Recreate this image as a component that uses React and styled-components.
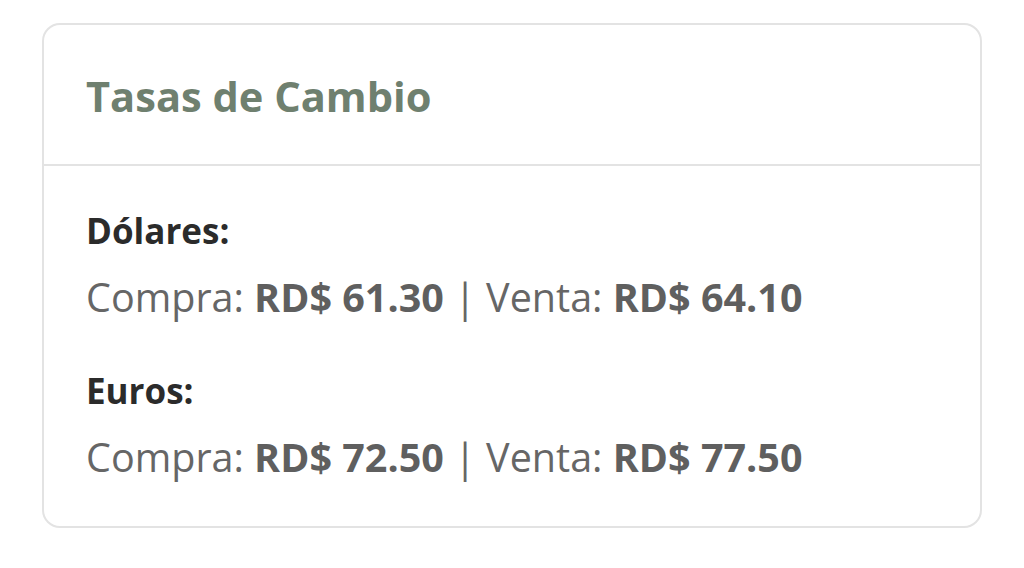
import React from 'react'
import styled, { createGlobalStyle } from 'styled-components'

const Global = createGlobalStyle`
  body {
    margin: 0;
    background: #ffffff;
    font-family: "Open Sans", "Noto Sans", sans-serif;
  }
`

const Page = styled.div`
  padding: 23px 42px 0 42px;
`

const Card = styled.section`
  border: 2px solid #e3e3e3;
  border-radius: 18px;
  background: #fff;
  overflow: hidden;
`

const Header = styled.div`
  height: 141px;
  padding: 46px 42px 0;
  border-bottom: 2px solid #e3e3e3;
  box-sizing: border-box;
`

const Title = styled.h2`
  margin: 0;
  font-size: 41.6px;
  line-height: 50px;
  font-weight: 700;
  color: #6f806f;
`

const Body = styled.div`
  padding: 43px 42px 42px;
  display: flex;
  flex-direction: column;
  gap: 45px;
`

const Group = styled.div`
  display: flex;
  flex-direction: column;
  gap: 17px;
`

const Label = styled.div`
  font-size: 35px;
  font-weight: 700;
  color: #2b2b2b;
  line-height: 44px;
`

const Rates = styled.div`
  font-size: 39.5px;
  color: #666666;
  line-height: 54px;
  white-space: nowrap;
`

const Value = styled.strong`
  font-weight: 700;
  color: #5f5f5f;
`

const rates = [
  { name: 'Dólares', buy: '61.30', sell: '64.10' },
  { name: 'Euros', buy: '72.50', sell: '77.50' },
]

export default function App() {
  return (
    <>
      <Global />
      <Page>
        <Card>
          <Header>
            <Title>Tasas de Cambio</Title>
          </Header>
          <Body>
            {rates.map((r) => (
              <Group key={r.name}>
                <Label>{r.name}:</Label>
                <Rates>
                  Compra: <Value>RD$ {r.buy}</Value> | Venta: <Value>RD$ {r.sell}</Value>
                </Rates>
              </Group>
            ))}
          </Body>
        </Card>
      </Page>
    </>
  )
}
